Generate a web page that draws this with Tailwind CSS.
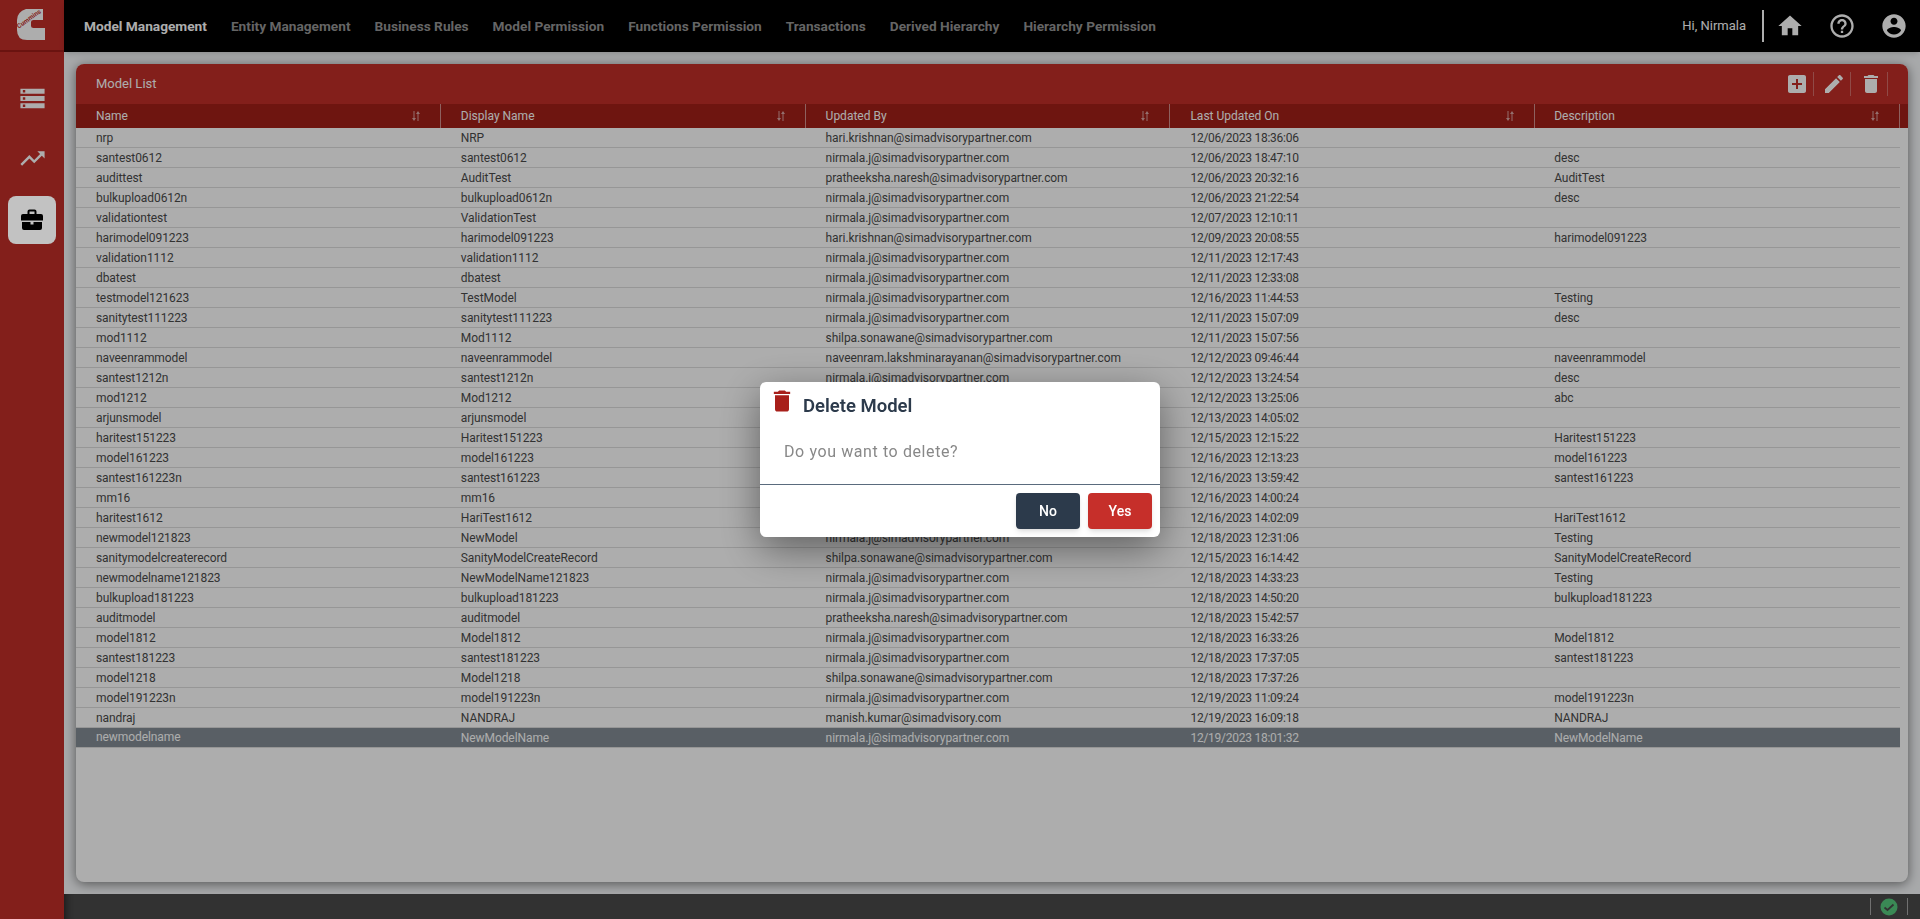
<!DOCTYPE html>
<html lang="en">
<head>
<meta charset="utf-8">
<title>Model List</title>
<script src="https://cdn.jsdelivr.net/npm/@tailwindcss/browser@4"></script>
</head>
<body class="font-[family-name:Roboto,sans-serif] overflow-hidden">
<div class="flex h-[919px] w-[1920px] bg-[#f8fafc]">
  <aside class="w-16 shrink-0 bg-[#c22e29] flex flex-col items-center">
    <div class="w-full h-[52px] border-b-2 border-[#9c1d18] relative shrink-0">
      <svg class="absolute left-0 top-0" width="64" height="50" viewBox="0 0 64 50"><path fill="#fff" d="M26 9 L43 9 L43 20 L33.500 20 Q31 20 31 22 L31 26 Q31 28 33.500 28 L45 28 L45 40 L27 40 Q17 40 17 30 L17 20 Q17 12 26 9Z"/></svg>
      <span class="absolute left-[15px] top-[15px] text-[6.500px] leading-[8px] font-bold text-[#c22e29] -rotate-[36deg] origin-center">Cummins</span>
    </div>
    <div class="flex flex-col items-center pt-[22px] gap-3 w-12">
      <div class="h-12 flex items-center justify-center"><svg width="29" height="29" viewBox="0 0 24 24" fill="#fff"><path d="M2 20h20v-4H2v4zm2-3h2v2H4v-2zM2 4v4h20V4H2zm4 3H4V5h2v2zm-4 7h20v-4H2v4zm2-3h2v2H4v-2z"/></svg></div>
      <div class="h-12 flex items-center justify-center"><svg width="29" height="29" viewBox="0 0 24 24" fill="#fff"><path d="M16 6l2.290 2.290-4.880 4.880-4-4L2 16.590 3.410 18l6-6 4 4 6.300-6.290L22 12V6z"/></svg></div>
      <div class="relative z-50 mt-[2px] w-12 h-12 rounded-lg bg-[#c2c2c2] flex items-center justify-center"><svg width="24" height="24" viewBox="0 0 24 24" fill="#000"><path d="M9.500 1.500h5a2 2 0 0 1 2 2V6H21a2 2 0 0 1 2 2v4.500H1V8a2 2 0 0 1 2-2h4.500V3.500a2 2 0 0 1 2-2zM9.500 3.500V6h5V3.500h-5zM2 14h8.500v2.500h3V14H22v6a2 2 0 0 1-2 2H4a2 2 0 0 1-2-2z"/></svg></div>
    </div>
  </aside>

  <div class="flex-1 min-w-0 flex flex-col">
    <header class="h-[52px] shrink-0 bg-black flex items-center pl-5 pr-3 shadow-md">
      <nav class="flex items-center gap-6 text-[13.700px] font-bold text-[#969696]">
        <span class="text-white">Model Management</span>
        <span>Entity Management</span>
        <span>Business Rules</span>
        <span>Model Permission</span>
        <span>Functions Permission</span>
        <span>Transactions</span>
        <span>Derived Hierarchy</span>
        <span>Hierarchy Permission</span>
      </nav>
      <div class="ml-auto flex items-center text-white">
        <span class="text-[13px] mr-4">Hi, Nirmala</span>
        <span class="w-[2px] h-8 bg-white mr-3"></span>
        <div class="flex items-center gap-6">
          <svg width="28" height="28" viewBox="0 0 24 24" fill="#fff"><path d="M10 20v-6h4v6h5v-8h3L12 3 2 12h3v8z"/></svg>
          <svg width="28" height="28" viewBox="0 0 24 24" fill="#fff"><path d="M11 18h2v-2h-2v2zm1-16C6.480 2 2 6.480 2 12s4.480 10 10 10 10-4.480 10-10S17.520 2 12 2zm0 18c-4.410 0-8-3.590-8-8s3.590-8 8-8 8 3.590 8 8-3.590 8-8 8zm0-14c-2.210 0-4 1.790-4 4h2c0-1.100.9-2 2-2s2 .9 2 2c0 2-3 1.750-3 5h2c0-2.250 3-2.500 3-5 0-2.210-1.790-4-4-4z"/></svg>
          <svg width="28" height="28" viewBox="0 0 24 24" fill="#fff"><path d="M12 2C6.480 2 2 6.480 2 12s4.480 10 10 10 10-4.480 10-10S17.520 2 12 2zm0 3c1.660 0 3 1.340 3 3s-1.340 3-3 3-3-1.340-3-3 1.340-3 3-3zm0 14.200c-2.500 0-4.710-1.280-6-3.220.03-1.990 4-3.080 6-3.080 1.990 0 5.970 1.090 6 3.080-1.290 1.940-3.500 3.220-6 3.220z"/></svg>
        </div>
      </div>
    </header>

    <main class="flex-1 min-h-0 p-3">
      <section class="h-full rounded-lg bg-white shadow-[0_2px_12px_rgba(0,0,0,0.5)] overflow-hidden flex flex-col">
        <div class="h-10 shrink-0 bg-[#c22e29] flex items-center pl-5 pr-5">
          <h2 class="text-[13px] text-white font-normal">Model List</h2>
          <div class="ml-auto flex items-center">
            <div class="w-[37px] h-6 pl-1 border-r border-white/30 flex items-center justify-center"><svg width="24" height="24" viewBox="0 0 24 24" fill="#fff"><path d="M19 3H5c-1.110 0-2 .9-2 2v14c0 1.100.89 2 2 2h14c1.100 0 2-.9 2-2V5c0-1.100-.9-2-2-2zm-2 10h-4v4h-2v-4H7v-2h4V7h2v4h4v2z"/></svg></div>
            <div class="w-[37px] h-6 pl-1 border-r border-white/30 flex items-center justify-center"><svg width="24" height="24" viewBox="0 0 24 24" fill="#fff"><path d="M3 17.250V21h3.750L17.810 9.940l-3.750-3.750L3 17.250zM20.710 7.040c.39-.39.39-1.020 0-1.410l-2.340-2.340c-.39-.39-1.020-.39-1.410 0l-1.830 1.830 3.750 3.750 1.830-1.830z"/></svg></div>
            <div class="w-[37px] h-6 pl-1 border-r border-white/30 flex items-center justify-center"><svg width="24" height="24" viewBox="0 0 24 24" fill="#fff"><path d="M6 19c0 1.100.9 2 2 2h8c1.100 0 2-.9 2-2V7H6v12zM19 4h-3.500l-1-1h-5l-1 1H5v2h14V4z"/></svg></div>
          </div>
        </div>
        <div class="h-6 shrink-0 bg-[#a31f18]">
          <div class="w-[1824px] h-6 grid grid-cols-5 text-xs text-white [&>div]:flex [&>div]:items-center [&>div]:justify-between [&>div]:pl-5 [&>div]:pr-5 [&>div]:border-r [&>div]:border-white/50">
            <div><span>Name</span><svg width="8" height="10" viewBox="0 0 8 10" fill="#fff" fill-opacity=".6"><path d="M1.500 0h1v7H4L2 10 0 7h1.500zM5.500 10h1V3H8L6 0 4 3h1.500z"/></svg></div>
            <div><span>Display Name</span><svg width="8" height="10" viewBox="0 0 8 10" fill="#fff" fill-opacity=".6"><path d="M1.500 0h1v7H4L2 10 0 7h1.500zM5.500 10h1V3H8L6 0 4 3h1.500z"/></svg></div>
            <div><span>Updated By</span><svg width="8" height="10" viewBox="0 0 8 10" fill="#fff" fill-opacity=".6"><path d="M1.500 0h1v7H4L2 10 0 7h1.500zM5.500 10h1V3H8L6 0 4 3h1.500z"/></svg></div>
            <div><span>Last Updated On</span><svg width="8" height="10" viewBox="0 0 8 10" fill="#fff" fill-opacity=".6"><path d="M1.500 0h1v7H4L2 10 0 7h1.500zM5.500 10h1V3H8L6 0 4 3h1.500z"/></svg></div>
            <div><span class="-ml-px">Description</span><svg width="8" height="10" viewBox="0 0 8 10" fill="#fff" fill-opacity=".6"><path d="M1.500 0h1v7H4L2 10 0 7h1.500zM5.500 10h1V3H8L6 0 4 3h1.500z"/></svg></div>
          </div>
        </div>
        <table class="w-[1824px] table-fixed border-separate border-spacing-0 text-xs text-[#4b4b4b] tracking-[-0.08px] [&_td]:h-5 [&_td]:pl-5 [&_td]:border-b [&_td]:border-[#dedede] [&_td]:leading-4 [&_td]:whitespace-nowrap [&_td:nth-child(4)]:tracking-[-0.25px] [&_td:last-child]:pl-[19px]">
          <tbody>
            <tr><td>nrp</td><td>NRP</td><td>hari.krishnan@simadvisorypartner.com</td><td>12/06/2023 18:36:06</td><td></td></tr>
            <tr><td>santest0612</td><td>santest0612</td><td>nirmala.j@simadvisorypartner.com</td><td>12/06/2023 18:47:10</td><td>desc</td></tr>
            <tr><td>audittest</td><td>AuditTest</td><td>pratheeksha.naresh@simadvisorypartner.com</td><td>12/06/2023 20:32:16</td><td>AuditTest</td></tr>
            <tr><td>bulkupload0612n</td><td>bulkupload0612n</td><td>nirmala.j@simadvisorypartner.com</td><td>12/06/2023 21:22:54</td><td>desc</td></tr>
            <tr><td>validationtest</td><td>ValidationTest</td><td>nirmala.j@simadvisorypartner.com</td><td>12/07/2023 12:10:11</td><td></td></tr>
            <tr><td>harimodel091223</td><td>harimodel091223</td><td>hari.krishnan@simadvisorypartner.com</td><td>12/09/2023 20:08:55</td><td>harimodel091223</td></tr>
            <tr><td>validation1112</td><td>validation1112</td><td>nirmala.j@simadvisorypartner.com</td><td>12/11/2023 12:17:43</td><td></td></tr>
            <tr><td>dbatest</td><td>dbatest</td><td>nirmala.j@simadvisorypartner.com</td><td>12/11/2023 12:33:08</td><td></td></tr>
            <tr><td>testmodel121623</td><td>TestModel</td><td>nirmala.j@simadvisorypartner.com</td><td>12/16/2023 11:44:53</td><td>Testing</td></tr>
            <tr><td>sanitytest111223</td><td>sanitytest111223</td><td>nirmala.j@simadvisorypartner.com</td><td>12/11/2023 15:07:09</td><td>desc</td></tr>
            <tr><td>mod1112</td><td>Mod1112</td><td>shilpa.sonawane@simadvisorypartner.com</td><td>12/11/2023 15:07:56</td><td></td></tr>
            <tr><td>naveenrammodel</td><td>naveenrammodel</td><td>naveenram.lakshminarayanan@simadvisorypartner.com</td><td>12/12/2023 09:46:44</td><td>naveenrammodel</td></tr>
            <tr><td>santest1212n</td><td>santest1212n</td><td>nirmala.j@simadvisorypartner.com</td><td>12/12/2023 13:24:54</td><td>desc</td></tr>
            <tr><td>mod1212</td><td>Mod1212</td><td>nirmala.j@simadvisorypartner.com</td><td>12/12/2023 13:25:06</td><td>abc</td></tr>
            <tr><td>arjunsmodel</td><td>arjunsmodel</td><td>nirmala.j@simadvisorypartner.com</td><td>12/13/2023 14:05:02</td><td></td></tr>
            <tr><td>haritest151223</td><td>Haritest151223</td><td>hari.krishnan@simadvisorypartner.com</td><td>12/15/2023 12:15:22</td><td>Haritest151223</td></tr>
            <tr><td>model161223</td><td>model161223</td><td>nirmala.j@simadvisorypartner.com</td><td>12/16/2023 12:13:23</td><td>model161223</td></tr>
            <tr><td>santest161223n</td><td>santest161223</td><td>nirmala.j@simadvisorypartner.com</td><td>12/16/2023 13:59:42</td><td>santest161223</td></tr>
            <tr><td>mm16</td><td>mm16</td><td>nirmala.j@simadvisorypartner.com</td><td>12/16/2023 14:00:24</td><td></td></tr>
            <tr><td>haritest1612</td><td>HariTest1612</td><td>hari.krishnan@simadvisorypartner.com</td><td>12/16/2023 14:02:09</td><td>HariTest1612</td></tr>
            <tr><td>newmodel121823</td><td>NewModel</td><td>nirmala.j@simadvisorypartner.com</td><td>12/18/2023 12:31:06</td><td>Testing</td></tr>
            <tr><td>sanitymodelcreaterecord</td><td>SanityModelCreateRecord</td><td>shilpa.sonawane@simadvisorypartner.com</td><td>12/15/2023 16:14:42</td><td>SanityModelCreateRecord</td></tr>
            <tr><td>newmodelname121823</td><td>NewModelName121823</td><td>nirmala.j@simadvisorypartner.com</td><td>12/18/2023 14:33:23</td><td>Testing</td></tr>
            <tr><td>bulkupload181223</td><td>bulkupload181223</td><td>nirmala.j@simadvisorypartner.com</td><td>12/18/2023 14:50:20</td><td>bulkupload181223</td></tr>
            <tr><td>auditmodel</td><td>auditmodel</td><td>pratheeksha.naresh@simadvisorypartner.com</td><td>12/18/2023 15:42:57</td><td></td></tr>
            <tr><td>model1812</td><td>Model1812</td><td>nirmala.j@simadvisorypartner.com</td><td>12/18/2023 16:33:26</td><td>Model1812</td></tr>
            <tr><td>santest181223</td><td>santest181223</td><td>nirmala.j@simadvisorypartner.com</td><td>12/18/2023 17:37:05</td><td>santest181223</td></tr>
            <tr><td>model1218</td><td>Model1218</td><td>shilpa.sonawane@simadvisorypartner.com</td><td>12/18/2023 17:37:26</td><td></td></tr>
            <tr><td>model191223n</td><td>model191223n</td><td>nirmala.j@simadvisorypartner.com</td><td>12/19/2023 11:09:24</td><td>model191223n</td></tr>
            <tr><td>nandraj</td><td>NANDRAJ</td><td>manish.kumar@simadvisory.com</td><td>12/19/2023 16:09:18</td><td>NANDRAJ</td></tr>
            <tr class="bg-[#838d96] text-white"><td><span class="block -translate-y-px">newmodelname</span></td><td>NewModelName</td><td>nirmala.j@simadvisorypartner.com</td><td>12/19/2023 18:01:32</td><td>NewModelName</td></tr>
          </tbody>
        </table>
      </section>
    </main>

    <footer class="h-[25px] shrink-0 bg-[#4b4b4b] shadow-[inset_10px_0_8px_-8px_rgba(0,0,0,0.5)] flex items-center justify-end pr-3">
      <span class="w-px h-[17px] bg-white/50"></span>
      <svg class="mx-[9px]" width="18" height="18" viewBox="0 0 18 18"><circle cx="9" cy="9" r="8.500" fill="#56cb7e"/><path d="M4.500 9.500 L7.500 12 L13.500 6.500" fill="none" stroke="#4b4b4b" stroke-width="1.800"/></svg>
      <span class="w-px h-[17px] bg-white/50"></span>
    </footer>
  </div>
</div>

<div class="fixed inset-0 z-40 bg-black/[0.32] flex items-center justify-center">
  <div role="dialog" class="w-[400px] h-[155px] bg-white rounded-md shadow-[0_12px_40px_rgba(0,0,0,0.45)] flex flex-col">
    <div class="h-[46px] shrink-0 flex items-start pl-2 pt-[5px] gap-[7px]">
      <svg width="28" height="28" viewBox="0 0 24 24" fill="#a81f1a"><path d="M6 19c0 1.100.9 2 2 2h8c1.100 0 2-.9 2-2V7H6v12zM19 4h-3.500l-1-1h-5l-1 1H5v2h14V4z"/></svg>
      <h3 class="text-[18.500px] leading-6 font-semibold text-[#2c3a4b] mt-[7px]">Delete Model</h3>
    </div>
    <p class="h-[56px] shrink-0 pl-6 pt-3 text-base leading-6 tracking-[0.6px] text-[#888]">Do you want to delete?</p>
    <div class="flex-1 border-t border-[#5a6b7d] flex items-center justify-end gap-2 p-2">
      <button class="w-16 h-9 rounded bg-[#2c3a4b] text-white text-sm font-medium shadow-md">No</button>
      <button class="w-16 h-9 rounded bg-[#c62f2a] text-white text-sm font-medium shadow-md">Yes</button>
    </div>
  </div>
</div>
</body>
</html>
